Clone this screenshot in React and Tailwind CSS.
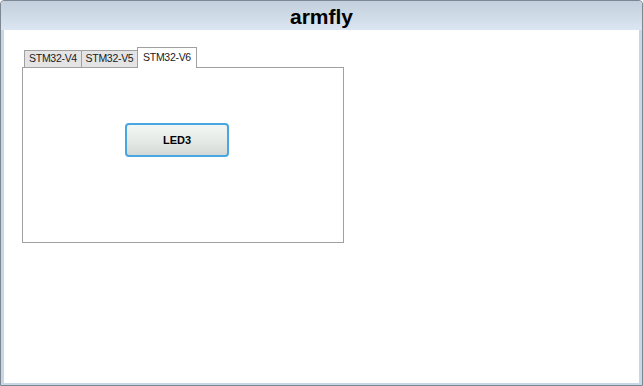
const tabs = [
  { label: 'STM32-V4', w: 'w-[58px]' },
  { label: 'STM32-V5', w: 'w-[57px]' },
  { label: 'STM32-V6', w: 'w-[60px]' },
]

const App = () => {
  const active = 2

  return (
    <div
      className="w-[643px] h-[386px] flex flex-col bg-[#c9d6e4] border border-[#7d8791] rounded-t-[4px] overflow-hidden"
      style={{ fontFamily: '"Liberation Sans", Arial, sans-serif' }}
    >
      {/* title bar */}
      <div className="h-[29px] shrink-0 flex items-center justify-center bg-gradient-to-b from-[#c3cfdc] to-[#dbe6f2]">
        <span className="text-[21px] font-bold text-black leading-none mt-[1px]">armfly</span>
      </div>

      {/* client area */}
      <div className="flex-1 mx-[3px] mb-[2px] bg-white pl-[18px] pt-[17px]">
        {/* tab strip */}
        <div className="flex items-end h-[20px] pl-[2px]">
          {tabs.map((t, i) =>
            i === active ? (
              <div
                key={t.label}
                className={`${t.w} relative z-10 h-[21px] flex items-center justify-center bg-white border border-b-0 border-[#a0a0a0] text-[10.5px] tracking-[-0.3px] text-[#202020] -mb-[1px]`}
              >
                {t.label}
              </div>
            ) : (
              <div
                key={t.label}
                className={`${t.w} h-[17px] flex items-center justify-center bg-[#e4e4e4] border border-b-0 border-[#a0a0a0] text-[10.5px] tracking-[-0.3px] text-[#202020] -mr-[1px]`}
              >
                {t.label}
              </div>
            )
          )}
        </div>

        {/* tab panel */}
        <div className="w-[322px] h-[176px] border border-[#a0a0a0] bg-white pl-[102px] pt-[55px]">
          <button className="w-[104px] h-[34px] rounded-[4px] border-2 border-[#4aa6e0] bg-gradient-to-b from-[#f2f6f4] via-[#e6ebe8] to-[#d4d8d6] text-[11px] font-bold text-black flex items-center justify-center">
            LED3
          </button>
        </div>
      </div>
    </div>
  )
}

export default App
